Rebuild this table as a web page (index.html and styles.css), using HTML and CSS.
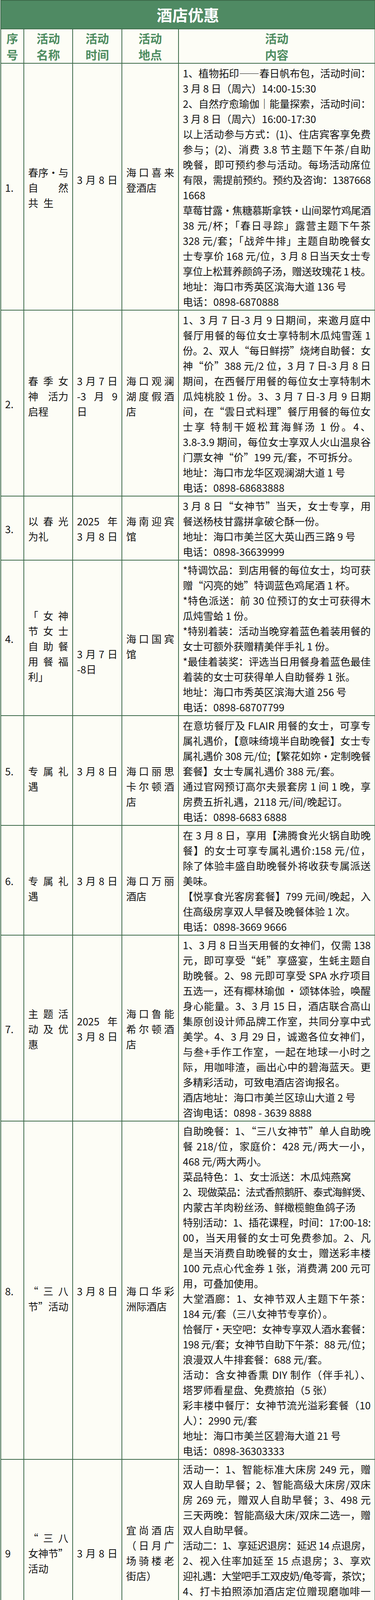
FILE: index.html
```html
<!DOCTYPE html>
<html lang="zh-CN">
<head>
<meta charset="utf-8">
<title>酒店优惠</title>
<link rel="stylesheet" href="styles.css">
</head>
<body>
<table class="tbl">
<colgroup><col class="c1"><col class="c2"><col class="c3"><col class="c4"><col class="c5"></colgroup>
<thead>
<tr><th colspan="5" class="title">酒店优惠</th></tr>
<tr class="hd">
<th><div class="h">序</div><div class="h">号</div></th>
<th><div class="h">活动</div><div class="h">名称</div></th>
<th><div class="h">活动</div><div class="h">时间</div></th>
<th><div class="h">活动</div><div class="h">地点</div></th>
<th><div class="h">活动</div><div class="h">内容</div></th>
</tr>
</thead>
<tbody>
<tr>
<td><div class="ln">1.</div></td>
<td><div class="ln sb"><span>春</span><span>序·与</span></div><div class="ln sb"><span>自</span><span>然</span></div><div class="ln">共&ensp;生</div></td>
<td><div class="ln j">3月8日</div><div class="ln e">&nbsp;</div></td>
<td><div class="ln j">海口喜来</div><div class="ln">登酒店</div><div class="ln e">&nbsp;</div></td>
<td>
<div class="ln j">1、植物拓印——春日帆布包，活动时间：</div>
<div class="ln">3 月 8 日（周六）14:00-15:30</div>
<div class="ln j">2、自然疗愈瑜伽｜能量探索，活动时间：</div>
<div class="ln">3 月 8 日（周六）16:00-17:30</div>
<div class="ln j">以上活动参与方式：(1)、住店宾客享免费</div>
<div class="ln j">参与；(2)、消费 3.8 节主题下午茶/自助</div>
<div class="ln j">晚餐，即可预约参与活动。每场活动席位</div>
<div class="ln j">有限，需提前预约。预约及咨询：1387668</div>
<div class="ln">1668</div>
<div class="ln j">草莓甘露·焦糖慕斯拿铁·山间翠竹鸡尾酒</div>
<div class="ln j">38 元/杯；「春日寻踪」露营主题下午茶</div>
<div class="ln j">328 元/套；「战斧牛排」主题自助晚餐女</div>
<div class="ln j">士专享价 168 元/位，3 月 8 日当天女士专</div>
<div class="ln j">享位上松茸养颜鸽子汤，赠送玫瑰花 1 枝。</div>
<div class="ln">地址：海口市秀英区滨海大道 136 号</div>
<div class="ln">电话：0898-6870888</div>
</td>
</tr>
<tr>
<td><div class="ln">2.</div></td>
<td><div class="ln j">春季女</div><div class="ln sb"><span>神</span><span>活力</span></div><div class="ln">启程</div><div class="ln e">&nbsp;</div></td>
<td><div class="ln j">3月7日</div><div class="ln sb"><span>-3</span><span>月</span><span>9</span></div><div class="ln">日</div><div class="ln e">&nbsp;</div></td>
<td><div class="ln j">海口观澜</div><div class="ln j">湖度假酒</div><div class="ln">店</div><div class="ln e">&nbsp;</div></td>
<td>
<div class="ln j">1、3 月 7 日-3 月 9 日期间，来邀月庭中</div>
<div class="ln j">餐厅用餐的每位女士享特制木瓜炖雪莲 1</div>
<div class="ln j">份。2、双人“每日鲜捞”烧烤自助餐：女</div>
<div class="ln j">神“价”388 元/2 位，3 月 7 日-3 月 8 日</div>
<div class="ln j">期间，在西餐厅用餐的每位女士享特制木</div>
<div class="ln j">瓜炖桃胶 1 份。3、3 月 7 日-3 月 9 日期</div>
<div class="ln j">间，在“雲日式料理”餐厅用餐的每位女</div>
<div class="ln j">士享 特制干姬松茸海鲜汤 1 份。4、</div>
<div class="ln j">3.8-3.9 期间，每位女士享双人火山温泉谷</div>
<div class="ln">门票女神“价”199 元/套，不可拆分。</div>
<div class="ln">地址：海口市龙华区观澜湖大道 1 号</div>
<div class="ln">电话：0898-68683888</div>
</td>
</tr>
<tr>
<td><div class="ln">3.</div></td>
<td><div class="ln j">以春光</div><div class="ln">为礼</div></td>
<td><div class="ln sb"><span>2025</span><span>年</span></div><div class="ln j">3月8日</div></td>
<td><div class="ln j">海南迎宾</div><div class="ln">馆</div></td>
<td>
<div class="ln j">3 月 8 日“女神节”当天，女士专享，用</div>
<div class="ln">餐送杨枝甘露拼拿破仑酥一份。</div>
<div class="ln">地址：海口市美兰区大英山西三路 9 号</div>
<div class="ln">电话：0898-36639999</div>
</td>
</tr>
<tr>
<td><div class="ln">4.</div></td>
<td><div class="ln e">&nbsp;</div><div class="ln j">「女神</div><div class="ln j">节女士</div><div class="ln j">自助餐</div><div class="ln j">用餐福</div><div class="ln">利」</div></td>
<td><div class="ln e">&nbsp;</div><div class="ln e">&nbsp;</div><div class="ln e">&nbsp;</div><div class="ln j">3月7日</div><div class="ln">-8日</div></td>
<td><div class="ln e">&nbsp;</div><div class="ln j">海口国宾</div><div class="ln">馆</div></td>
<td>
<div class="ln j">*特调饮品：到店用餐的每位女士，均可获</div>
<div class="ln">赠“闪亮的她”特调蓝色鸡尾酒 1 杯。</div>
<div class="ln j">*特色派送：前 30 位预订的女士可获得木</div>
<div class="ln">瓜炖雪蛤 1 份。</div>
<div class="ln j">*特别着装：活动当晚穿着蓝色着装用餐的</div>
<div class="ln">女士可额外获赠精美伴手礼 1 份。</div>
<div class="ln j">*最佳着装奖：评选当日用餐身着蓝色最佳</div>
<div class="ln">着装的女士可获得单人自助餐券 1 张。</div>
<div class="ln">地址：海口市秀英区滨海大道 256 号</div>
<div class="ln">电话：0898-68707799</div>
</td>
</tr>
<tr>
<td><div class="ln">5.</div></td>
<td><div class="ln e">&nbsp;</div><div class="ln j">专属礼</div><div class="ln">遇</div></td>
<td><div class="ln j">3月8日</div></td>
<td><div class="ln e">&nbsp;</div><div class="ln e">&nbsp;</div><div class="ln j">海口丽思</div><div class="ln j">卡尔顿酒</div><div class="ln">店</div></td>
<td>
<div class="ln j">在意坊餐厅及 FLAIR 用餐的女士，可享专</div>
<div class="ln j">属礼遇价，【意味绮境半自助晚餐】女士专</div>
<div class="ln j">属礼遇价 308 元/位;【繁花如妳•定制晚餐</div>
<div class="ln">套餐】女士专属礼遇价 388 元/套。</div>
<div class="ln j">通过官网预订高尔夫景套房 1 间 1 晚，享</div>
<div class="ln">房费五折礼遇，2118 元/间/晚起订。</div>
<div class="ln">电话：0898-6683 6888</div>
</td>
</tr>
<tr>
<td><div class="ln">6.</div></td>
<td><div class="ln e">&nbsp;</div><div class="ln j">专属礼</div><div class="ln">遇</div></td>
<td><div class="ln j">3月8日</div></td>
<td><div class="ln e">&nbsp;</div><div class="ln j">海口万丽</div><div class="ln">酒店</div></td>
<td>
<div class="ln j">在 3 月 8 日，享用【沸腾食光火锅自助晚</div>
<div class="ln j">餐】的女士可享专属礼遇价:158 元/位，</div>
<div class="ln j">除了体验丰盛自助晚餐外将收获专属派送</div>
<div class="ln">美味。</div>
<div class="ln j">【悦享食光客房套餐】799 元间/晚起，入</div>
<div class="ln">住高级房享双人早餐及晚餐体验 1 次。</div>
<div class="ln">电话：0898-3669 9666</div>
</td>
</tr>
<tr>
<td><div class="ln">7.</div></td>
<td><div class="ln j">主题活</div><div class="ln j">动及优</div><div class="ln">惠</div></td>
<td><div class="ln sb"><span>2025</span><span>年</span></div><div class="ln j">3月8日</div></td>
<td><div class="ln j">海口鲁能</div><div class="ln j">希尔顿酒</div><div class="ln">店</div></td>
<td>
<div class="ln j">1、3 月 8 日当天用餐的女神们，仅需 138</div>
<div class="ln j">元，即可享受“蚝”享盛宴，生蚝主题自</div>
<div class="ln j">助晚餐。2、98 元即可享受 SPA 水疗项目</div>
<div class="ln j">五选一，还有椰林瑜伽 · 颂钵体验，唤醒</div>
<div class="ln j">身心能量。3、3 月 15 日，酒店联合高山</div>
<div class="ln j">集原创设计师品牌工作室，共同分享中式</div>
<div class="ln j">美学。4、3 月 29 日，诚邀各位女神们，</div>
<div class="ln j">与叁+手作工作室，一起在地球一小时之</div>
<div class="ln j">际，用咖啡渣，画出心中的碧海蓝天。更</div>
<div class="ln">多精彩活动，可致电酒店咨询报名。</div>
<div class="ln">酒店地址：海口市美兰区琼山大道 2 号</div>
<div class="ln">咨询电话：0898 - 3639 8888</div>
</td>
</tr>
<tr>
<td><div class="ln">8.</div></td>
<td><div class="ln e">&nbsp;</div><div class="ln j">“三八</div><div class="ln sb"><span>节”</span><span>活动</span></div></td>
<td><div class="ln j">3月8日</div></td>
<td><div class="ln e">&nbsp;</div><div class="ln j">海口华彩</div><div class="ln">洲际酒店</div></td>
<td>
<div class="ln j">自助晚餐：1、“三八女神节”单人自助晚</div>
<div class="ln j">餐 218/位，家庭价：428 元/两大一小，</div>
<div class="ln">468 元/两大两小。</div>
<div class="ln">菜品特色：1、女士派送：木瓜炖燕窝</div>
<div class="ln j">2、现做菜品：法式香煎鹅肝、泰式海鲜煲、</div>
<div class="ln">内蒙古羊肉粉丝汤、鲜橄榄鲍鱼鸽子汤</div>
<div class="ln j">特别活动：1、插花课程，时间：17:00-18:</div>
<div class="ln j">00，当天用餐的女士可免费参加。2、凡</div>
<div class="ln j">是当天消费自助晚餐的女士，赠送彩丰楼</div>
<div class="ln j">100 元点心代金券 1 张，消费满 200 元可</div>
<div class="ln">用，可叠加使用。</div>
<div class="ln j">大堂酒廊：1、女神节双人主题下午茶：</div>
<div class="ln">184 元/套（三八女神节专享价）。</div>
<div class="ln j">恰餐厅·天空吧：女神专享双人酒水套餐：</div>
<div class="ln j">198 元/套；女神节自助下午茶：88 元/位；</div>
<div class="ln">浪漫双人牛排套餐：688 元/套。</div>
<div class="ln j">活动：含女神香熏 DIY 制作（伴手礼）、</div>
<div class="ln">塔罗师看星盘、免费旅拍（5 张）</div>
<div class="ln j">彩丰楼中餐厅：女神节流光溢彩套餐（10</div>
<div class="ln">人）：2990 元/套</div>
<div class="ln">地址：海口市美兰区碧海大道 21 号</div>
<div class="ln">电话：0898-36303333</div>
</td>
</tr>
<tr>
<td><div class="ln">9</div></td>
<td><div class="ln j">“三八</div><div class="ln">女神节”</div><div class="ln">活动</div></td>
<td><div class="ln j">3月8日</div></td>
<td><div class="ln j">宜尚酒店</div><div class="ln j">（日月广</div><div class="ln j">场骑楼老</div><div class="ln">街店）</div></td>
<td>
<div class="ln j">活动一：1、智能标准大床房 249 元，赠</div>
<div class="ln j">双人自助早餐；2、智能高级大床房/双床</div>
<div class="ln j">房 269 元，赠双人自助早餐；3、498 元</div>
<div class="ln j">三天两晚：智能高级大床/双床二选一，赠</div>
<div class="ln">双人自助早餐。</div>
<div class="ln j">活动二：1、享延迟退房：延迟 14 点退房，</div>
<div class="ln j">2、视入住率加延至 15 点退房；3、享欢</div>
<div class="ln j">迎礼遇：大堂吧手工双皮奶/龟苓膏，茶饮；</div>
<div class="ln j">4、打卡拍照添加酒店定位赠现磨咖啡一</div>
<div class="ln">杯。</div>
<div class="ln">地点：海口市美兰区蓝天路 25 号</div>
<div class="ln">电话：17330852937</div>
</td>
</tr>
<tr>
<td><div class="ln">10.</div></td>
<td><div class="ln j">女神节</div><div class="ln j">云端盛</div><div class="ln">宴</div></td>
<td><div class="ln j">3月8日</div></td>
<td><div class="ln j">海口希尔</div><div class="ln">顿酒店</div></td>
<td>
<div class="ln j">3 月 8 日节日当天午晚时段，海口希尔顿</div>
<div class="ln j">酒店 33 层云端海景自助餐厅，明星厨师</div>
<div class="ln j">特别派送，女士专享牛奶桃胶炖木瓜，宠</div>
<div class="ln">爱你的味蕾！</div>
<div class="ln">地址：海口市龙华区滨海大道 109-9 号</div>
<div class="ln">电话：0898-36798888</div>
</td>
</tr>
<tr>
<td><div class="ln">11.</div></td>
<td><div class="ln e">&nbsp;</div><div class="ln j">南岛北</div><div class="ln j">岸，果愈</div><div class="ln">悦己</div></td>
<td><div class="ln j">3月8日</div></td>
<td><div class="ln j">海口万豪</div><div class="ln">酒店</div></td>
<td>
<div class="ln j">福利 1、「海南热带水果五感之旅」3 月 8</div>
<div class="ln j">日 14:30 ~16:30，水果盲品挑战+芳疗大</div>
<div class="ln j">师课+女神热带水果体验小礼盒；福利 2、</div>
<div class="ln j">「非遗静修营」1188 元豪华海景房 1 间 1</div>
<div class="ln j">晚+单人自助早餐+正念蔬食午餐+五感</div>
<div class="ln j">艺术疗愈静修营+旅拍+汉服体验；福利</div>
<div class="ln j">3、「3.8 女神节尊享」178 元起享海鲜烧</div>
<div class="ln j">烤主题自助晚餐｜定制甜品派送｜自选</div>
<div class="ln j">调制鸡尾酒｜鲜花伴手礼｜特色海鲜火</div>
<div class="ln j">锅｜铁板烧｜刺身等超 200 多种宝藏美</div>
<div class="ln">食。</div>
<div class="ln">地址：海口市秀英区滨海大道 292 号</div>
<div class="ln">电话：0898-68708666</div>
</td>
</tr>
<tr>
<td><div class="ln">12.</div></td>
<td><div class="ln j">春日氧</div><div class="ln">感</div><div class="ln e">&nbsp;</div></td>
<td><div class="ln j">即日起</div><div class="ln sb"><span>至</span><span>5</span><span>月</span></div><div class="ln">31日</div></td>
<td><div class="ln j">洲至奢选</div><div class="ln j">海口亚特</div><div class="ln">酒店</div></td>
<td>
<div class="ln j">1、春之悦享——悦享假期 4 天 3 晚客房</div>
<div class="ln j">套餐 1999 元，入住豪华客房一间 3 晚(可</div>
<div class="ln j">拆分)。2、春之怡享——怡享假期 3 天 2</div>
<div class="ln j">晚客房套餐 1499 元,入住豪华客房一间 2</div>
<div class="ln j">晚。3、春之礼享——精英商务 2 天 1 晚</div>
<div class="ln j">旅居套餐 999 元,入住豪华客房一间 1 晚。</div>
<div class="ln">地址：海口市秀英区长滨一路 7 号</div>
<div class="ln">电话：0898-36306666</div>
</td>
</tr>
<tr>
<td><div class="ln">13.</div></td>
<td><div class="ln j">女神节</div><div class="ln">挚礼</div></td>
<td><div class="ln j">3月8日</div></td>
<td><div class="ln j">海口南海</div><div class="ln j">希尔顿欢</div><div class="ln">朋酒店</div></td>
<td>
<div class="ln j">A 套餐：高级房 1 晚+双早+下午茶/商务</div>
<div class="ln j">套餐+儿童乐园畅玩 428 元；B 套餐：高</div>
<div class="ln j">级房 2 晚（可拆分）+2 大 2 小早餐+儿童</div>
<div class="ln j">乐园畅玩 738 元；下午茶套餐：9 款精美</div>
<div class="ln j">甜品点心+英式红茶/金桔柠檬水/百香果</div>
<div class="ln">红茶（三选一）98 元。</div>
<div class="ln j">地址：海口市秀英区南海大道 889 号南海</div>
<div class="ln">幸福汇一期</div>
<div class="ln">电话：0898-68610999</div>
</td>
</tr>
<tr>
<td><div class="ln">14.</div></td>
<td><div class="ln j">优惠活</div><div class="ln">动</div></td>
<td><div class="ln j">3月8日</div></td>
<td><div class="ln sb"><span>麗</span><span>枫</span><span>酒</span></div><div class="ln j">店·海口西</div><div class="ln">海岸店</div></td>
<td>
<div class="ln j">标准房型：328 元折后 258 元；商务房</div>
<div class="ln j">型:368 元折后 288 元；海景房型:380 元</div>
<div class="ln">折后 328 元。</div>
<div class="ln j">以上含双早，3.8 节活动当天享受免费升</div>
<div class="ln">级房型。</div>
<div class="ln j">地址：海口市秀英区滨海大道大华西海岸</div>
<div class="ln">29 号</div>
<div class="ln">电话：0898-31560588</div>
</td>
</tr>
<tr>
<td><div class="ln">15.</div><div class="ln e">&nbsp;</div><div class="ln e">&nbsp;</div><div class="ln e">&nbsp;</div><div class="ln e">&nbsp;</div><div class="ln e">&nbsp;</div></td>
<td><div class="ln sb"><span>宠</span><span>妳</span><span>｜</span></div><div class="ln j">女神专</div><div class="ln j">属「食」</div><div class="ln">光</div><div class="ln e">&nbsp;</div><div class="ln e">&nbsp;</div></td>
<td><div class="ln j">3月8日</div><div class="ln e">&nbsp;</div><div class="ln e">&nbsp;</div><div class="ln e">&nbsp;</div></td>
<td><div class="ln j">海口星海</div><div class="ln j">湾铂尔曼</div><div class="ln">酒店</div><div class="ln e">&nbsp;</div><div class="ln e">&nbsp;</div><div class="ln e">&nbsp;</div></td>
<td>
<div class="ln j">1、周末自助晚餐：3 月 8 日周六当天，女</div>
<div class="ln j">士用餐可享两人同行，一人免单，赠玫瑰</div>
<div class="ln j">花 1 枝。(298 元/双人限前 10 位，约满</div>
<div class="ln">即止)</div>
<div class="ln j">2、银座日料：3 月 8 日周六当天，女士用</div>
<div class="ln j">餐可享门市价零点 6.8 折，赠奶油鲜芋泥</div>
<div class="ln">1 份+日式清酒 1 壶。</div>
<div class="ln j">3、星悦阁：3 月 8 日周六当天，女士用餐</div>
<div class="ln j">可享门市价零点 6.8 折，赠养生绿湖海黄</div>
<div class="ln">羹 1 份+精美凉菜 1 份。</div>
<div class="ln">4、全身去角质精油护理（60 分钟）</div>
<div class="ln j">舒享两人同行，一人免单（450 元/双人，</div>
<div class="ln">有效期至 6 月 30 日）</div>
<div class="ln">电话：0898-66106666</div>
</td>
</tr>
<tr>
<td><div class="ln">16.</div></td>
<td><div class="ln">3.8 约</div><div class="ln sb"><span>“惠”</span><span>女</span></div><div class="ln">神节</div></td>
<td><div class="ln j">3月8日</div></td>
<td><div class="ln j">海南皇马</div><div class="ln j">假日酒店</div><div class="ln">集团</div></td>
<td>
<div class="ln j">2 折福利来袭，董事长霸气降临直播间，</div>
<div class="ln j">亲自撒福利！3 月 7 日 20:00-23:00 锁定</div>
<div class="ln j">直播，抢 9.9 元鲜仓双人海鲜火锅套餐；</div>
<div class="ln j">29.9 元假日一品派茶楼 2 人下午茶；159</div>
<div class="ln j">元皇马主题客房 1 晚（6 店通用券）；超值</div>
<div class="ln">0 元秒杀，5 分钟一波，福利不断档！</div>
<div class="ln">关注【皇马集团董事长老树根】抖音号！</div>
</td>
</tr>
</tbody>
</table>
<script src="script.js"></script>
</body>
</html>
```

FILE: styles.css
```css
* { box-sizing: border-box; }
html, body { margin: 0; padding: 0; background: #ffffff; }
body {
  width: 960px;
  font-family: "Noto Sans CJK SC", sans-serif;
  color: #141414;
}
.tbl {
  width: 958px;
  margin: 0 0 0 1px;
  border-collapse: collapse;
  table-layout: fixed;
  background: #fdfdf6;
}
.tbl col.c1 { width: 59px; }
.tbl col.c2 { width: 125px; }
.tbl col.c3 { width: 126px; }
.tbl col.c4 { width: 145px; }
.tbl col.c5 { width: 503px; }

.tbl th, .tbl td {
  border: 2px solid #3d6a4a;
  padding: 4px 10px 2px;
  vertical-align: middle;
  font-size: 26px;
  line-height: 39px;
  font-weight: 400;
  text-align: left;
}
.tbl th.title {
  background: #4f8a63;
  color: #ffffff;
  font-size: 40px;
  font-weight: 700;
  height: 73px;
  line-height: 69px;
  padding: 0;
  text-align: center;
}
.tbl .hd th {
  color: #4e8c61;
  font-weight: 700;
  font-size: 30px;
  line-height: 42px;
  text-align: center;
  padding: 1px 2px 1px;
}
.h { height: 42px; }
.ln {
  display: block;
  height: 39px;
  text-align: left;
}
.j { text-align: justify; text-align-last: justify; }
.sb { display: flex; justify-content: space-between; }
.sb span { white-space: nowrap; flex: none; }
.ln.measure {
  display: block;
  white-space: nowrap;
  text-align: left;
  text-align-last: auto;
}
```

FILE: script.js
```js
(function () {
  function fit() {
    var lines = document.querySelectorAll('.ln');
    for (var i = 0; i < lines.length; i++) {
      var el = lines[i];
      el.style.letterSpacing = '';
      var avail = el.clientWidth;
      el.classList.add('measure');
      var r = document.createRange();
      r.selectNodeContents(el);
      var w = r.getBoundingClientRect().width;
      el.classList.remove('measure');
      if (w > avail + 0.2) {
        var n = el.textContent.replace(/\s+$/, '').replace(/^\s+/, '').length;
        if (n > 0) {
          el.style.letterSpacing = (-(w - avail) / n - 0.05).toFixed(2) + 'px';
        }
      }
    }
  }
  fit();
  if (document.fonts && document.fonts.ready) {
    document.fonts.ready.then(fit);
  }
})();
```
